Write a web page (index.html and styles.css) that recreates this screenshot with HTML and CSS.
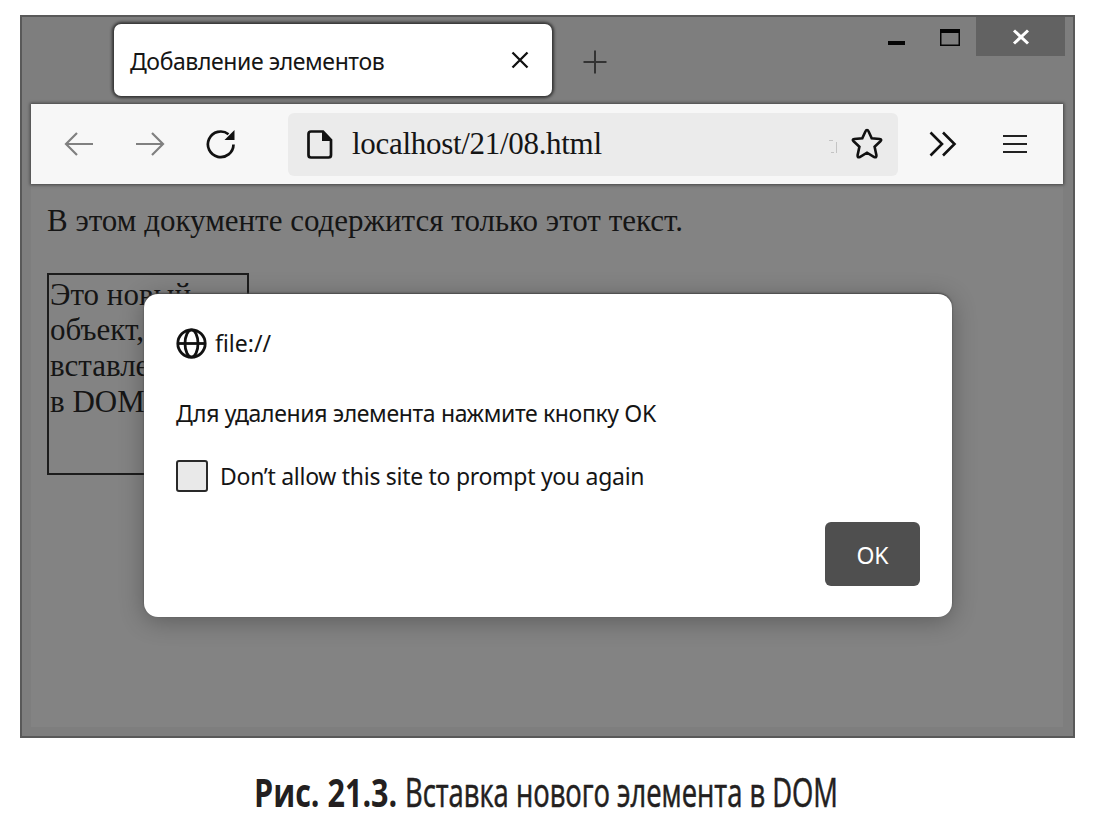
FILE: index.html
```html
<!DOCTYPE html>
<html lang="ru">
<head>
<meta charset="utf-8">
<title>Добавление элементов</title>
<link rel="stylesheet" href="styles.css">
</head>
<body>
<figure class="figure">
  <div class="window">
    <header class="titlebar">
      <div class="tab">
        <span class="tab-title">Добавление элементов</span>
        <svg class="tab-close" width="18" height="18" viewBox="0 0 18 18"><path d="M1.500 1.500l15 15M16.500 1.500l-15 15"/></svg>
      </div>
      <svg class="new-tab" width="24" height="24" viewBox="0 0 24 24"><path d="M12 0.500v23M0.500 12h23"/></svg>
      <div class="controls">
        <svg class="minimize" width="17" height="4" viewBox="0 0 17 4"><path d="M0 0h17v4H0z"/></svg>
        <svg class="maximize" width="20" height="17" viewBox="0 0 20 17"><path fill-rule="evenodd" d="M0 0h20v17H0zM1.500 4v11.500h17V4z"/></svg>
        <div class="close"><svg width="18" height="16" viewBox="0 0 18 16"><path d="M2 1.500l14 13M16 1.500l-14 13"/></svg></div>
      </div>
    </header>
    <nav class="toolbar">
      <svg class="arrow" width="30" height="24" viewBox="0 0 30 24"><path d="M29 12H2M13 1L2 12l11 11"/></svg>
      <svg class="arrow forward" width="30" height="24" viewBox="0 0 30 24"><path d="M1 12h27M17 1l11 11-11 11"/></svg>
      <svg class="reload" width="30" height="30" viewBox="0 0 30 30"><path class="line" d="M27.500 15.500A12.800 12.800 0 1 1 22.500 5.200"/><path d="M28.500 1v10h-10z"/></svg>
      <div class="address">
        <svg class="page" width="26" height="29" viewBox="0 0 26 29"><path class="line" d="M4 1.500h12L24 10v15a2.500 2.500 0 0 1-2.500 2.500H4A2.500 2.500 0 0 1 1.500 25V4A2.500 2.500 0 0 1 4 1.500z"/><path d="M15 1l9.500 10H15z"/></svg>
        <span class="url">localhost/21/08.html</span>
        <svg class="speck" width="9" height="16" viewBox="0 0 9 16"><path d="M0 1.500h4M7.500 3v11M2 13.500h3"/></svg>
        <svg class="star" width="32" height="32" viewBox="0 0 32 32"><path d="M16 2q1 0 1.500 1.200l3.200 7.100 8 .7q2.600.4.700 2.300l-5.800 5.400 1.800 8.600q.2 2.800-2.200 1.700L16 24.700 8.800 29q-2.400 1.100-2.200-1.700l1.800-8.600-5.800-5.400Q.7 11.400 3.300 11l8-.7 3.200-7.100Q15 2 16 2z"/></svg>
      </div>
      <svg class="more" width="28" height="26" viewBox="0 0 28 26"><path d="M1.500 1.500L13 13 1.500 24.500M14 1.500L25.500 13 14 24.500"/></svg>
      <svg class="menu" width="24" height="20" viewBox="0 0 24 20"><path d="M0 2h24M0 10h24M0 18h24"/></svg>
    </nav>
    <main class="content">
      <p class="text">В этом документе содержится только этот текст.</p>
      <div class="box">Это новый<br>объект,<br>вставленный<br>в DOM</div>
    </main>
    <section class="dialog">
      <div class="origin">
        <svg class="globe" width="31" height="31" viewBox="0 0 31 31"><circle cx="15.500" cy="15.500" r="13.700"/><ellipse cx="15.500" cy="15.500" rx="6.500" ry="13.700"/><path d="M2 15.500h27"/></svg>
        <span class="source">file://</span>
      </div>
      <p class="message">Для удаления элемента нажмите кнопку OK</p>
      <label class="option"><span class="checkbox"></span><span class="option-text">Don’t allow this site to prompt you again</span></label>
      <button class="ok" type="button">OK</button>
    </section>
  </div>
  <figcaption class="caption"><b class="number">Рис. 21.3.</b><span class="title">Вставка нового элемента в DOM</span></figcaption>
</figure>
</body>
</html>
```
FILE: styles.css
```css
* { box-sizing: border-box; }
body { margin: 0; background: #fff; }
svg { display: block; flex: none; fill: none; stroke: #111; }
.figure { margin: 0; padding: 15px 0 0 20px; height: 824px; overflow: hidden; }
.window {
  position: relative;
  width: 1055px; height: 723px;
  padding: 0 10px 9px 9px;
  border: 2px solid #595959;
  background: #7e7e7e;
  color: #151515;
  font: 24px/32px "Noto Sans", sans-serif;
  white-space: nowrap;
}
.titlebar { display: flex; height: 87px; padding: 7px 0 0 83px; }
.tab {
  display: flex; align-items: center; justify-content: space-between;
  width: 438px; height: 72px; padding: 2px 23px 0 16px;
  border-radius: 7px; background: #fff;
  box-shadow: 0 0 3px 2px #333;
}
.tab-title { font-size: 23px; letter-spacing: -.4px; }
.tab-close { margin-bottom: 3px; stroke-width: 2.3; }
.new-tab { margin: 26px 0 0 31px; stroke: #333; stroke-width: 2; }
.controls { display: flex; margin: -7px -2px 0 auto; }
.controls svg { fill: #050505; stroke: none; }
.minimize { margin-top: 24px; }
.maximize { margin: 12px 16px 0 35px; }
.close { display: grid; place-items: center; width: 89px; height: 39px; background: #626262; }
.controls .close svg { fill: none; stroke: #fff; stroke-width: 3; }
.toolbar {
  position: relative;
  display: flex; align-items: center;
  height: 80px; padding-left: 33px;
  background: #f7f7f7; box-shadow: 0 0 3px 1px #444;
}
.arrow { stroke: #808080; stroke-width: 2.2; }
.forward { margin-left: 41px; }
.reload { margin-left: 41px; }
.reload path, .page path { fill: #111; stroke: none; }
.reload .line, .page .line { fill: none; stroke: #111; stroke-width: 2.7; }
.address {
  display: flex; align-items: center;
  width: 610px; height: 63px; margin-left: 52px; padding: 0 15px 0 19px;
  border-radius: 6px; background: #ebebeb;
}
.url { margin-left: 19px; font: 31px/36px "Liberation Serif", serif; letter-spacing: -.3px; }
.speck { margin: 5px 13px 0 auto; stroke: #c4c4c4; }
.star { stroke-width: 2.6; }
.more { margin-left: 31px; stroke-width: 2.6; }
.menu { margin-left: 46px; stroke: #222; stroke-width: 2.2; }
.content {
  height: 543px; padding: 19px 16px;
  background: #838383;
  font: 31px/35.7px "Liberation Serif", serif;
}
.text { margin: 0 0 34px; }
.box { width: 202px; height: 202px; padding: 2px 0 0 1px; border: 2px solid #1c1c1c; }
.dialog {
  position: absolute; left: 122px; top: 277px;
  display: flex; flex-direction: column; align-items: flex-start;
  width: 808px; height: 323px; padding: 32px 32px 31px;
  border-radius: 14px; background: #fff;
  box-shadow: 0 -1px 2px #444, 0 4px 24px rgba(0, 0, 0, .3);
}
.origin { display: flex; align-items: center; gap: 8px; height: 34px; }
.globe { stroke-width: 2.8; }
.message { margin: 37px 0 0; letter-spacing: -.36px; }
.option { display: flex; align-items: center; gap: 12px; margin-top: 31px; }
.option-text { letter-spacing: -.29px; }
.checkbox { width: 32px; height: 32px; border: 2px solid #292929; border-radius: 3px; background: #e9e9e9; }
.source, .message, .option-text { font-size: 23px; }
.ok {
  width: 95px; height: 64px; margin: auto 0 0 auto; padding: 1px 0 0;
  border: 0; border-radius: 6px; background: #4f4f4f;
  color: #fff; font: 23px "Noto Sans", sans-serif;
}
.caption {
  display: flex; margin: 27px 0 0 234px;
  color: #231f20; font: 39.5px/54px "Open Sans", sans-serif; white-space: nowrap;
}
.number, .title { transform-origin: 0 50%; }
.number { width: 151px; transform: scaleX(.773); }
.title { transform: scaleX(.692); -webkit-text-stroke: .6px #231f20; }
```
